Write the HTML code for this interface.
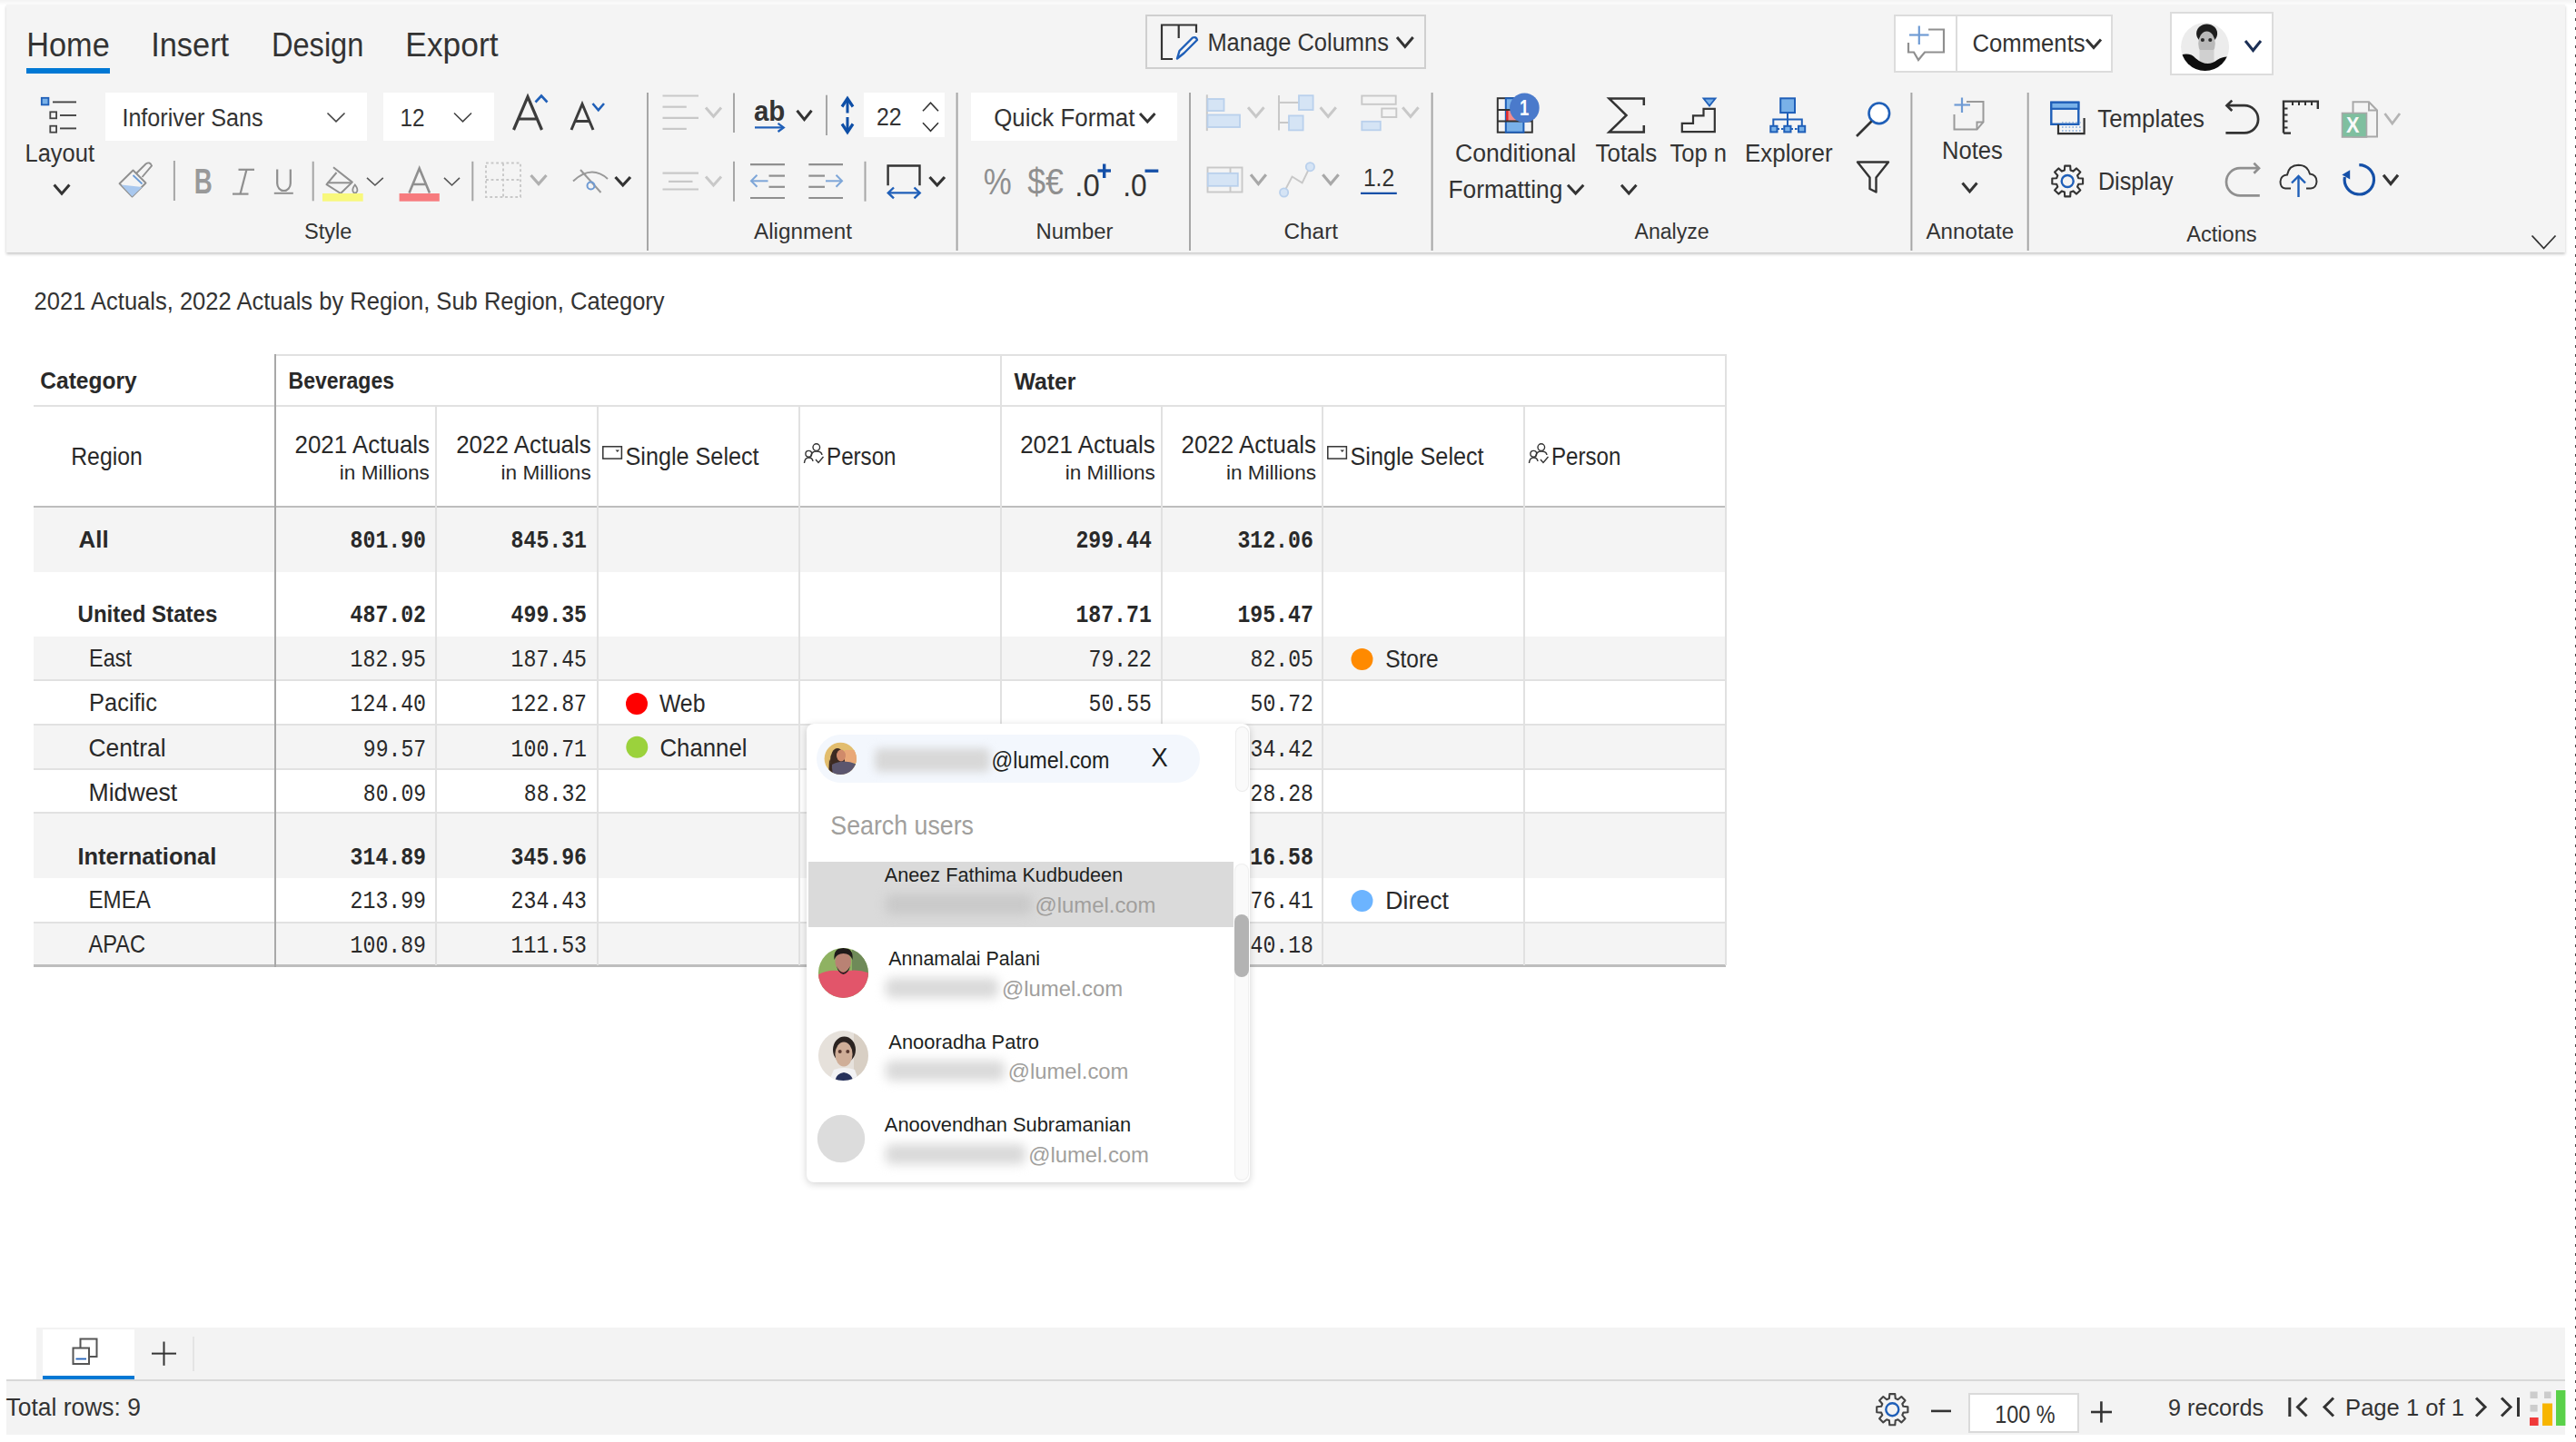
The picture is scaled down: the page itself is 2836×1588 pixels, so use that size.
<!DOCTYPE html>
<html><head><meta charset="utf-8"><title>Inforiver</title><style>
html,body{margin:0;padding:0;width:2836px;height:1588px;overflow:hidden;background:#fff;}
.t{position:absolute;white-space:nowrap;line-height:1;}
.b{position:absolute;}
svg.ov{position:absolute;left:0;top:0;width:2836px;height:1588px;}
</style></head>
<body>
<div class="b" style="left:0px;top:0px;width:2836px;height:5px;background:linear-gradient(#f3f3f3,#fdfdfd);z-index:0;"></div>
<div class="b" style="left:7px;top:5px;width:2817px;height:273px;background:#f4f4f4;z-index:1;box-shadow:0 2px 3px rgba(0,0,0,0.22);"></div>
<div class="b" style="left:2834.5px;top:0px;width:1.5px;height:1588px;background:repeating-linear-gradient(#444 0 3px, transparent 3px 10px);z-index:2;"></div>
<div class="b" style="left:29px;top:75px;width:92px;height:6px;background:#0078d4;z-index:3;"></div>
<div class="b" style="left:1261px;top:16px;width:309px;height:60px;background:transparent;z-index:3;border:2px solid #cfcfcf;box-sizing:border-box;"></div>
<div class="b" style="left:2085px;top:16px;width:241px;height:64px;background:#fff;z-index:3;border:2px solid #dcdcdc;box-sizing:border-box;"></div>
<div class="b" style="left:2153px;top:16px;width:2px;height:64px;background:#dcdcdc;z-index:4;"></div>
<div class="b" style="left:2389px;top:13px;width:114px;height:70px;background:#fff;z-index:3;border:2px solid #dcdcdc;box-sizing:border-box;"></div>
<div class="b" style="left:116px;top:102px;width:288px;height:53px;background:#fff;z-index:3;"></div>
<div class="b" style="left:422px;top:102px;width:122px;height:53px;background:#fff;z-index:3;"></div>
<div class="b" style="left:951px;top:102px;width:89px;height:49px;background:#fff;z-index:3;"></div>
<div class="b" style="left:1069px;top:102px;width:227px;height:53px;background:#fff;z-index:3;"></div>
<div class="b" style="left:37px;top:559px;width:1863px;height:71px;background:#f4f4f4;z-index:1;"></div>
<div class="b" style="left:37px;top:630px;width:1863px;height:71px;background:#fff;z-index:1;"></div>
<div class="b" style="left:37px;top:701px;width:1863px;height:48px;background:#f4f4f4;z-index:1;"></div>
<div class="b" style="left:37px;top:748px;width:1863px;height:2px;background:#e1e1e1;z-index:2;"></div>
<div class="b" style="left:37px;top:749px;width:1863px;height:49px;background:#fff;z-index:1;"></div>
<div class="b" style="left:37px;top:797px;width:1863px;height:2px;background:#e1e1e1;z-index:2;"></div>
<div class="b" style="left:37px;top:798px;width:1863px;height:49px;background:#f4f4f4;z-index:1;"></div>
<div class="b" style="left:37px;top:846px;width:1863px;height:2px;background:#e1e1e1;z-index:2;"></div>
<div class="b" style="left:37px;top:847px;width:1863px;height:48px;background:#fff;z-index:1;"></div>
<div class="b" style="left:37px;top:894px;width:1863px;height:2px;background:#e1e1e1;z-index:2;"></div>
<div class="b" style="left:37px;top:895px;width:1863px;height:72px;background:#f4f4f4;z-index:1;"></div>
<div class="b" style="left:37px;top:967px;width:1863px;height:49px;background:#fff;z-index:1;"></div>
<div class="b" style="left:37px;top:1015px;width:1863px;height:2px;background:#e1e1e1;z-index:2;"></div>
<div class="b" style="left:37px;top:1016px;width:1863px;height:47px;background:#f4f4f4;z-index:1;"></div>
<div class="b" style="left:302px;top:390px;width:1598px;height:2px;background:#e1e1e1;z-index:2;"></div>
<div class="b" style="left:37px;top:446px;width:1863px;height:2px;background:#e1e1e1;z-index:2;"></div>
<div class="b" style="left:37px;top:557px;width:1863px;height:2px;background:#bdbdbd;z-index:2;"></div>
<div class="b" style="left:37px;top:1062px;width:1863px;height:3px;background:#bdbdbd;z-index:2;"></div>
<div class="b" style="left:302px;top:390px;width:2px;height:675px;background:#a8a8a8;z-index:3;"></div>
<div class="b" style="left:1101px;top:390px;width:2px;height:673px;background:#e1e1e1;z-index:2;"></div>
<div class="b" style="left:1899px;top:390px;width:2px;height:673px;background:#e1e1e1;z-index:2;"></div>
<div class="b" style="left:479px;top:447px;width:2px;height:616px;background:#e1e1e1;z-index:2;"></div>
<div class="b" style="left:657px;top:447px;width:2px;height:616px;background:#e1e1e1;z-index:2;"></div>
<div class="b" style="left:879px;top:447px;width:2px;height:616px;background:#e1e1e1;z-index:2;"></div>
<div class="b" style="left:1278px;top:447px;width:2px;height:616px;background:#e1e1e1;z-index:2;"></div>
<div class="b" style="left:1455px;top:447px;width:2px;height:616px;background:#e1e1e1;z-index:2;"></div>
<div class="b" style="left:1677px;top:447px;width:2px;height:616px;background:#e1e1e1;z-index:2;"></div>
<div class="b" style="left:40px;top:1462px;width:2784px;height:58px;background:#f3f3f3;z-index:1;"></div>
<div class="b" style="left:47px;top:1464px;width:101px;height:55px;background:#fff;z-index:2;"></div>
<div class="b" style="left:47px;top:1515px;width:101px;height:4px;background:#0078d4;z-index:3;"></div>
<div class="b" style="left:212px;top:1472px;width:2px;height:38px;background:#e4e4e4;z-index:2;"></div>
<div class="b" style="left:7px;top:1519px;width:2817px;height:2px;background:#d8d8d8;z-index:2;"></div>
<div class="b" style="left:7px;top:1521px;width:2817px;height:59px;background:#f3f3f3;z-index:1;"></div>
<div class="b" style="left:2167px;top:1534px;width:122px;height:44px;background:#fff;z-index:3;border:2px solid #dadada;box-sizing:border-box;"></div>
<div class="b" style="left:888px;top:797px;width:488px;height:505px;background:#fff;z-index:20;border-radius:8px;box-shadow:0 2px 8px rgba(0,0,0,0.18);"></div>
<div class="b" style="left:899px;top:809px;width:422px;height:53px;background:#f3f7fd;z-index:21;border-radius:27px;"></div>
<div class="b" style="left:963px;top:824px;width:127px;height:26px;background:#d8d8d8;z-index:21;filter:blur(5px);border-radius:6px;"></div>
<div class="b" style="left:890px;top:949px;width:468px;height:72px;background:#dadada;z-index:21;"></div>
<div class="b" style="left:1360px;top:800px;width:15px;height:72px;background:#fafafa;z-index:21;border-radius:8px;box-shadow:inset 0 0 0 1px #ececec;"></div>
<div class="b" style="left:1359px;top:951px;width:16px;height:349px;background:#fafafa;z-index:21;border-radius:8px;box-shadow:inset 0 0 0 1px #efefef;"></div>
<div class="b" style="left:1359px;top:1007px;width:16px;height:69px;background:#b3b3b3;z-index:22;border-radius:8px;"></div>
<div class="b" style="left:975px;top:984.7px;width:161px;height:22.0px;background:#c9c9c9;z-index:22;filter:blur(6px);border-radius:6px;"></div>
<div class="b" style="left:975px;top:1076.5px;width:124.40000000000009px;height:22.0px;background:#d9d9d9;z-index:22;filter:blur(6px);border-radius:6px;"></div>
<div class="b" style="left:975px;top:1168px;width:131.20000000000005px;height:22px;background:#d9d9d9;z-index:22;filter:blur(6px);border-radius:6px;"></div>
<div class="b" style="left:975px;top:1260px;width:153.70000000000005px;height:22px;background:#d9d9d9;z-index:22;filter:blur(6px);border-radius:6px;"></div>
<svg class="ov" style="z-index:5" width="2836" height="1588" viewBox="0 0 2836 1588">
<text x="29.3" y="62.0" font-family="'Liberation Sans', sans-serif" font-size="36" fill="#333333" font-weight="400" textLength="91.4" lengthAdjust="spacingAndGlyphs" >Home</text>
<text x="166.2" y="62.0" font-family="'Liberation Sans', sans-serif" font-size="36" fill="#333333" font-weight="400" textLength="86.0" lengthAdjust="spacingAndGlyphs" >Insert</text>
<text x="298.9" y="62.0" font-family="'Liberation Sans', sans-serif" font-size="36" fill="#333333" font-weight="400" textLength="101.5" lengthAdjust="spacingAndGlyphs" >Design</text>
<text x="446.3" y="62.0" font-family="'Liberation Sans', sans-serif" font-size="36" fill="#333333" font-weight="400" textLength="102.2" lengthAdjust="spacingAndGlyphs" >Export</text>
<text x="1329.4" y="55.9" font-family="'Liberation Sans', sans-serif" font-size="27" fill="#333333" font-weight="400" textLength="199.5" lengthAdjust="spacingAndGlyphs" >Manage Columns</text>
<text x="2171.5" y="57.3" font-family="'Liberation Sans', sans-serif" font-size="27" fill="#333333" font-weight="400" textLength="124.1" lengthAdjust="spacingAndGlyphs" >Comments</text>
<text x="27.5" y="178.0" font-family="'Liberation Sans', sans-serif" font-size="27" fill="#333333" font-weight="400" textLength="76.5" lengthAdjust="spacingAndGlyphs" >Layout</text>
<text x="134.4" y="138.9" font-family="'Liberation Sans', sans-serif" font-size="27" fill="#333333" font-weight="400" textLength="155.2" lengthAdjust="spacingAndGlyphs" >Inforiver Sans</text>
<text x="440.5" y="138.7" font-family="'Liberation Sans', sans-serif" font-size="27" fill="#333333" font-weight="400" textLength="27.0" lengthAdjust="spacingAndGlyphs" >12</text>
<text x="965.0" y="138.0" font-family="'Liberation Sans', sans-serif" font-size="27" fill="#333333" font-weight="400" textLength="27.6" lengthAdjust="spacingAndGlyphs" >22</text>
<text x="1094.2" y="138.7" font-family="'Liberation Sans', sans-serif" font-size="27" fill="#333333" font-weight="400" textLength="155.2" lengthAdjust="spacingAndGlyphs" >Quick Format</text>
<text x="1500.9" y="205.0" font-family="'Liberation Sans', sans-serif" font-size="27.5" fill="#333333" font-weight="400" textLength="34.2" lengthAdjust="spacingAndGlyphs" >1.2</text>
<text x="1602.0" y="177.8" font-family="'Liberation Sans', sans-serif" font-size="27" fill="#333333" font-weight="400" textLength="133.1" lengthAdjust="spacingAndGlyphs" >Conditional</text>
<text x="1594.5" y="217.6" font-family="'Liberation Sans', sans-serif" font-size="27" fill="#333333" font-weight="400" textLength="125.8" lengthAdjust="spacingAndGlyphs" >Formatting</text>
<text x="1756.5" y="177.8" font-family="'Liberation Sans', sans-serif" font-size="27" fill="#333333" font-weight="400" textLength="67.8" lengthAdjust="spacingAndGlyphs" >Totals</text>
<text x="1838.5" y="177.8" font-family="'Liberation Sans', sans-serif" font-size="27" fill="#333333" font-weight="400" textLength="62.5" lengthAdjust="spacingAndGlyphs" >Top n</text>
<text x="1920.9" y="177.5" font-family="'Liberation Sans', sans-serif" font-size="27" fill="#333333" font-weight="400" textLength="96.7" lengthAdjust="spacingAndGlyphs" >Explorer</text>
<text x="2138.0" y="174.7" font-family="'Liberation Sans', sans-serif" font-size="27" fill="#333333" font-weight="400" textLength="66.8" lengthAdjust="spacingAndGlyphs" >Notes</text>
<text x="2309.3" y="139.7" font-family="'Liberation Sans', sans-serif" font-size="27" fill="#333333" font-weight="400" textLength="117.7" lengthAdjust="spacingAndGlyphs" >Templates</text>
<text x="2309.9" y="209.0" font-family="'Liberation Sans', sans-serif" font-size="27" fill="#333333" font-weight="400" textLength="82.7" lengthAdjust="spacingAndGlyphs" >Display</text>
<text x="334.9" y="262.6" font-family="'Liberation Sans', sans-serif" font-size="23.5" fill="#333333" font-weight="400" textLength="52.5" lengthAdjust="spacingAndGlyphs" >Style</text>
<text x="830.0" y="262.6" font-family="'Liberation Sans', sans-serif" font-size="23.5" fill="#333333" font-weight="400" textLength="107.9" lengthAdjust="spacingAndGlyphs" >Alignment</text>
<text x="1140.5" y="262.6" font-family="'Liberation Sans', sans-serif" font-size="23.5" fill="#333333" font-weight="400" textLength="84.9" lengthAdjust="spacingAndGlyphs" >Number</text>
<text x="1413.5" y="262.6" font-family="'Liberation Sans', sans-serif" font-size="23.5" fill="#333333" font-weight="400" textLength="59.5" lengthAdjust="spacingAndGlyphs" >Chart</text>
<text x="1799.5" y="262.6" font-family="'Liberation Sans', sans-serif" font-size="23.5" fill="#333333" font-weight="400" textLength="82.2" lengthAdjust="spacingAndGlyphs" >Analyze</text>
<text x="2120.5" y="262.6" font-family="'Liberation Sans', sans-serif" font-size="23.5" fill="#333333" font-weight="400" textLength="96.7" lengthAdjust="spacingAndGlyphs" >Annotate</text>
<text x="2407.2" y="265.5" font-family="'Liberation Sans', sans-serif" font-size="23.5" fill="#333333" font-weight="400" textLength="77.5" lengthAdjust="spacingAndGlyphs" >Actions</text>
<rect x="712" y="102" width="2" height="174" fill="#a6a6a6"/>
<rect x="1052.6" y="102" width="2" height="174" fill="#a6a6a6"/>
<rect x="1309" y="102" width="2" height="174" fill="#a6a6a6"/>
<rect x="1575.6" y="102" width="2" height="174" fill="#a6a6a6"/>
<rect x="2103.4" y="102" width="2" height="174" fill="#a6a6a6"/>
<rect x="2231.7" y="102" width="2" height="174" fill="#a6a6a6"/>
<rect x="190.9" y="177" width="2" height="44" fill="#a6a6a6"/>
<rect x="343.7" y="177.8" width="2" height="43.5" fill="#a6a6a6"/>
<rect x="519.3" y="177.8" width="2" height="43.5" fill="#a6a6a6"/>
<rect x="807" y="102.5" width="2" height="43.5" fill="#a6a6a6"/>
<rect x="909" y="104.7" width="2" height="44.3" fill="#a6a6a6"/>
<rect x="807" y="177.8" width="2" height="43.89999999999998" fill="#a6a6a6"/>
<rect x="951.5" y="177.8" width="2" height="43.89999999999998" fill="#a6a6a6"/>
<text x="37.5" y="341.0" font-family="'Liberation Sans', sans-serif" font-size="27.5" fill="#333333" font-weight="400" textLength="694.1" lengthAdjust="spacingAndGlyphs" >2021 Actuals, 2022 Actuals by Region, Sub Region, Category</text>
<text x="44.3" y="428.0" font-family="'Liberation Sans', sans-serif" font-size="26.4" fill="#292929" font-weight="700" textLength="106.3" lengthAdjust="spacingAndGlyphs" >Category</text>
<text x="317.5" y="428.0" font-family="'Liberation Sans', sans-serif" font-size="26.4" fill="#292929" font-weight="700" textLength="116.5" lengthAdjust="spacingAndGlyphs" >Beverages</text>
<text x="1116.5" y="429.0" font-family="'Liberation Sans', sans-serif" font-size="26.4" fill="#292929" font-weight="700" textLength="67.8" lengthAdjust="spacingAndGlyphs" >Water</text>
<text x="78.2" y="512.3" font-family="'Liberation Sans', sans-serif" font-size="27.5" fill="#292929" font-weight="400" textLength="78.6" lengthAdjust="spacingAndGlyphs" >Region</text>
<text x="324.5" y="499.0" font-family="'Liberation Sans', sans-serif" font-size="27.5" fill="#292929" font-weight="400" textLength="148.6" lengthAdjust="spacingAndGlyphs" >2021 Actuals</text>
<text x="373.8" y="527.7" font-family="'Liberation Sans', sans-serif" font-size="22.5" fill="#292929" font-weight="400" textLength="99.1" lengthAdjust="spacingAndGlyphs" >in Millions</text>
<text x="502.2" y="499.0" font-family="'Liberation Sans', sans-serif" font-size="27.5" fill="#292929" font-weight="400" textLength="148.6" lengthAdjust="spacingAndGlyphs" >2022 Actuals</text>
<text x="551.6" y="527.7" font-family="'Liberation Sans', sans-serif" font-size="22.5" fill="#292929" font-weight="400" textLength="99.1" lengthAdjust="spacingAndGlyphs" >in Millions</text>
<text x="1123.2" y="499.0" font-family="'Liberation Sans', sans-serif" font-size="27.5" fill="#292929" font-weight="400" textLength="148.6" lengthAdjust="spacingAndGlyphs" >2021 Actuals</text>
<text x="1172.7" y="527.7" font-family="'Liberation Sans', sans-serif" font-size="22.5" fill="#292929" font-weight="400" textLength="99.1" lengthAdjust="spacingAndGlyphs" >in Millions</text>
<text x="1300.5" y="499.0" font-family="'Liberation Sans', sans-serif" font-size="27.5" fill="#292929" font-weight="400" textLength="148.6" lengthAdjust="spacingAndGlyphs" >2022 Actuals</text>
<text x="1349.9" y="527.7" font-family="'Liberation Sans', sans-serif" font-size="22.5" fill="#292929" font-weight="400" textLength="99.1" lengthAdjust="spacingAndGlyphs" >in Millions</text>
<text x="688.5" y="511.8" font-family="'Liberation Sans', sans-serif" font-size="27.5" fill="#292929" font-weight="400" textLength="147.1" lengthAdjust="spacingAndGlyphs" >Single Select</text>
<text x="1486.5" y="511.8" font-family="'Liberation Sans', sans-serif" font-size="27.5" fill="#292929" font-weight="400" textLength="147.1" lengthAdjust="spacingAndGlyphs" >Single Select</text>
<text x="910.1" y="511.8" font-family="'Liberation Sans', sans-serif" font-size="27.5" fill="#292929" font-weight="400" textLength="76.4" lengthAdjust="spacingAndGlyphs" >Person</text>
<text x="1708.0" y="511.8" font-family="'Liberation Sans', sans-serif" font-size="27.5" fill="#292929" font-weight="400" textLength="76.4" lengthAdjust="spacingAndGlyphs" >Person</text>
<text x="86.5" y="603.4" font-family="'Liberation Sans', sans-serif" font-size="26.4" fill="#292929" font-weight="700" textLength="33.1" lengthAdjust="spacingAndGlyphs" >All</text>
<text x="385.6" y="603.4" font-family="'Liberation Mono', monospace" font-size="27.6" fill="#292929" font-weight="700" textLength="83.4" lengthAdjust="spacingAndGlyphs" >801.90</text>
<text x="562.6" y="603.4" font-family="'Liberation Mono', monospace" font-size="27.6" fill="#292929" font-weight="700" textLength="83.4" lengthAdjust="spacingAndGlyphs" >845.31</text>
<text x="1184.4" y="603.4" font-family="'Liberation Mono', monospace" font-size="27.6" fill="#292929" font-weight="700" textLength="83.4" lengthAdjust="spacingAndGlyphs" >299.44</text>
<text x="1362.4" y="603.4" font-family="'Liberation Mono', monospace" font-size="27.6" fill="#292929" font-weight="700" textLength="83.4" lengthAdjust="spacingAndGlyphs" >312.06</text>
<text x="85.5" y="685.0" font-family="'Liberation Sans', sans-serif" font-size="26.4" fill="#292929" font-weight="700" textLength="153.8" lengthAdjust="spacingAndGlyphs" >United States</text>
<text x="385.6" y="685.0" font-family="'Liberation Mono', monospace" font-size="27.6" fill="#292929" font-weight="700" textLength="83.4" lengthAdjust="spacingAndGlyphs" >487.02</text>
<text x="562.6" y="685.0" font-family="'Liberation Mono', monospace" font-size="27.6" fill="#292929" font-weight="700" textLength="83.4" lengthAdjust="spacingAndGlyphs" >499.35</text>
<text x="1184.4" y="685.0" font-family="'Liberation Mono', monospace" font-size="27.6" fill="#292929" font-weight="700" textLength="83.4" lengthAdjust="spacingAndGlyphs" >187.71</text>
<text x="1362.4" y="685.0" font-family="'Liberation Mono', monospace" font-size="27.6" fill="#292929" font-weight="700" textLength="83.4" lengthAdjust="spacingAndGlyphs" >195.47</text>
<text x="98.1" y="733.9" font-family="'Liberation Sans', sans-serif" font-size="27.3" fill="#292929" font-weight="400" textLength="46.9" lengthAdjust="spacingAndGlyphs" >East</text>
<text x="385.6" y="733.9" font-family="'Liberation Mono', monospace" font-size="27.6" fill="#292929" font-weight="400" textLength="83.4" lengthAdjust="spacingAndGlyphs" >182.95</text>
<text x="562.6" y="733.9" font-family="'Liberation Mono', monospace" font-size="27.6" fill="#292929" font-weight="400" textLength="83.4" lengthAdjust="spacingAndGlyphs" >187.45</text>
<text x="1198.6" y="733.9" font-family="'Liberation Mono', monospace" font-size="27.6" fill="#292929" font-weight="400" textLength="69.3" lengthAdjust="spacingAndGlyphs" >79.22</text>
<text x="1376.6" y="733.9" font-family="'Liberation Mono', monospace" font-size="27.6" fill="#292929" font-weight="400" textLength="69.3" lengthAdjust="spacingAndGlyphs" >82.05</text>
<text x="98.1" y="783.0" font-family="'Liberation Sans', sans-serif" font-size="27.3" fill="#292929" font-weight="400" textLength="74.9" lengthAdjust="spacingAndGlyphs" >Pacific</text>
<text x="385.6" y="783.0" font-family="'Liberation Mono', monospace" font-size="27.6" fill="#292929" font-weight="400" textLength="83.4" lengthAdjust="spacingAndGlyphs" >124.40</text>
<text x="562.6" y="783.0" font-family="'Liberation Mono', monospace" font-size="27.6" fill="#292929" font-weight="400" textLength="83.4" lengthAdjust="spacingAndGlyphs" >122.87</text>
<text x="1198.6" y="783.0" font-family="'Liberation Mono', monospace" font-size="27.6" fill="#292929" font-weight="400" textLength="69.3" lengthAdjust="spacingAndGlyphs" >50.55</text>
<text x="1376.6" y="783.0" font-family="'Liberation Mono', monospace" font-size="27.6" fill="#292929" font-weight="400" textLength="69.3" lengthAdjust="spacingAndGlyphs" >50.72</text>
<text x="97.5" y="832.6" font-family="'Liberation Sans', sans-serif" font-size="27.3" fill="#292929" font-weight="400" textLength="85.0" lengthAdjust="spacingAndGlyphs" >Central</text>
<text x="399.8" y="832.6" font-family="'Liberation Mono', monospace" font-size="27.6" fill="#292929" font-weight="400" textLength="69.3" lengthAdjust="spacingAndGlyphs" >99.57</text>
<text x="562.6" y="832.6" font-family="'Liberation Mono', monospace" font-size="27.6" fill="#292929" font-weight="400" textLength="83.4" lengthAdjust="spacingAndGlyphs" >100.71</text>
<text x="1198.6" y="832.6" font-family="'Liberation Mono', monospace" font-size="27.6" fill="#292929" font-weight="400" textLength="69.3" lengthAdjust="spacingAndGlyphs" >31.03</text>
<text x="1376.6" y="832.6" font-family="'Liberation Mono', monospace" font-size="27.6" fill="#292929" font-weight="400" textLength="69.3" lengthAdjust="spacingAndGlyphs" >34.42</text>
<text x="97.5" y="881.5" font-family="'Liberation Sans', sans-serif" font-size="27.3" fill="#292929" font-weight="400" textLength="97.7" lengthAdjust="spacingAndGlyphs" >Midwest</text>
<text x="399.8" y="881.5" font-family="'Liberation Mono', monospace" font-size="27.6" fill="#292929" font-weight="400" textLength="69.3" lengthAdjust="spacingAndGlyphs" >80.09</text>
<text x="576.8" y="881.5" font-family="'Liberation Mono', monospace" font-size="27.6" fill="#292929" font-weight="400" textLength="69.3" lengthAdjust="spacingAndGlyphs" >88.32</text>
<text x="1198.6" y="881.5" font-family="'Liberation Mono', monospace" font-size="27.6" fill="#292929" font-weight="400" textLength="69.3" lengthAdjust="spacingAndGlyphs" >26.91</text>
<text x="1376.6" y="881.5" font-family="'Liberation Mono', monospace" font-size="27.6" fill="#292929" font-weight="400" textLength="69.3" lengthAdjust="spacingAndGlyphs" >28.28</text>
<text x="85.5" y="951.8" font-family="'Liberation Sans', sans-serif" font-size="26.4" fill="#292929" font-weight="700" textLength="152.7" lengthAdjust="spacingAndGlyphs" >International</text>
<text x="385.6" y="951.8" font-family="'Liberation Mono', monospace" font-size="27.6" fill="#292929" font-weight="700" textLength="83.4" lengthAdjust="spacingAndGlyphs" >314.89</text>
<text x="562.6" y="951.8" font-family="'Liberation Mono', monospace" font-size="27.6" fill="#292929" font-weight="700" textLength="83.4" lengthAdjust="spacingAndGlyphs" >345.96</text>
<text x="1184.4" y="951.8" font-family="'Liberation Mono', monospace" font-size="27.6" fill="#292929" font-weight="700" textLength="83.4" lengthAdjust="spacingAndGlyphs" >111.73</text>
<text x="1362.4" y="951.8" font-family="'Liberation Mono', monospace" font-size="27.6" fill="#292929" font-weight="700" textLength="83.4" lengthAdjust="spacingAndGlyphs" >116.58</text>
<text x="97.5" y="999.7" font-family="'Liberation Sans', sans-serif" font-size="27.3" fill="#292929" font-weight="400" textLength="68.4" lengthAdjust="spacingAndGlyphs" >EMEA</text>
<text x="385.6" y="999.7" font-family="'Liberation Mono', monospace" font-size="27.6" fill="#292929" font-weight="400" textLength="83.4" lengthAdjust="spacingAndGlyphs" >213.99</text>
<text x="562.6" y="999.7" font-family="'Liberation Mono', monospace" font-size="27.6" fill="#292929" font-weight="400" textLength="83.4" lengthAdjust="spacingAndGlyphs" >234.43</text>
<text x="1198.6" y="999.7" font-family="'Liberation Mono', monospace" font-size="27.6" fill="#292929" font-weight="400" textLength="69.3" lengthAdjust="spacingAndGlyphs" >73.10</text>
<text x="1376.6" y="999.7" font-family="'Liberation Mono', monospace" font-size="27.6" fill="#292929" font-weight="400" textLength="69.3" lengthAdjust="spacingAndGlyphs" >76.41</text>
<text x="97.5" y="1049.2" font-family="'Liberation Sans', sans-serif" font-size="27.3" fill="#292929" font-weight="400" textLength="62.6" lengthAdjust="spacingAndGlyphs" >APAC</text>
<text x="385.6" y="1049.2" font-family="'Liberation Mono', monospace" font-size="27.6" fill="#292929" font-weight="400" textLength="83.4" lengthAdjust="spacingAndGlyphs" >100.89</text>
<text x="562.6" y="1049.2" font-family="'Liberation Mono', monospace" font-size="27.6" fill="#292929" font-weight="400" textLength="83.4" lengthAdjust="spacingAndGlyphs" >111.53</text>
<text x="1198.6" y="1049.2" font-family="'Liberation Mono', monospace" font-size="27.6" fill="#292929" font-weight="400" textLength="69.3" lengthAdjust="spacingAndGlyphs" >38.63</text>
<text x="1376.6" y="1049.2" font-family="'Liberation Mono', monospace" font-size="27.6" fill="#292929" font-weight="400" textLength="69.3" lengthAdjust="spacingAndGlyphs" >40.18</text>
<circle cx="701" cy="775" r="12" fill="#ff0000"/>
<text x="725.9" y="783.7" font-family="'Liberation Sans', sans-serif" font-size="27.3" fill="#292929" font-weight="400" textLength="50.6" lengthAdjust="spacingAndGlyphs" >Web</text>
<circle cx="701.3" cy="822.7" r="12" fill="#9bd23c"/>
<text x="726.5" y="832.6" font-family="'Liberation Sans', sans-serif" font-size="27.3" fill="#292929" font-weight="400" textLength="96.0" lengthAdjust="spacingAndGlyphs" >Channel</text>
<circle cx="1499.5" cy="726" r="12" fill="#ff8a00"/>
<text x="1525.2" y="734.9" font-family="'Liberation Sans', sans-serif" font-size="27.3" fill="#292929" font-weight="400" textLength="58.5" lengthAdjust="spacingAndGlyphs" >Store</text>
<circle cx="1499.5" cy="992" r="12" fill="#6cb4ff"/>
<text x="1525.2" y="1001.3" font-family="'Liberation Sans', sans-serif" font-size="27.3" fill="#292929" font-weight="400" textLength="69.7" lengthAdjust="spacingAndGlyphs" >Direct</text>
<text x="6.5" y="1559.0" font-family="'Liberation Sans', sans-serif" font-size="27.5" fill="#333333" font-weight="400" textLength="148.4" lengthAdjust="spacingAndGlyphs" >Total rows: 9</text>
<text x="2196.2" y="1566.6" font-family="'Liberation Sans', sans-serif" font-size="27" fill="#333333" font-weight="400" textLength="66.4" lengthAdjust="spacingAndGlyphs" >100 %</text>
<text x="2387.0" y="1558.7" font-family="'Liberation Sans', sans-serif" font-size="25.5" fill="#333333" font-weight="400" textLength="105.0" lengthAdjust="spacingAndGlyphs" >9 records</text>
<text x="2582.1" y="1558.7" font-family="'Liberation Sans', sans-serif" font-size="25.5" fill="#333333" font-weight="400" textLength="130.8" lengthAdjust="spacingAndGlyphs" >Page 1 of 1</text>
<polyline points="1317,36 1317,27.5 1279,27.5 1279,65 1291,65" fill="none" stroke="#333333" stroke-width="2.2" stroke-linecap="butt" stroke-linejoin="miter" />
<line x1="1297.7" y1="27.5" x2="1297.7" y2="42" stroke="#333333" stroke-width="2.2" />
<path d="M1296,64.5 L1298.5,56 L1313,41.5 Q1317,40 1318,44 L1303.5,58.5 Z" fill="none" stroke="#1f5fb8" stroke-width="2.4" stroke-linejoin="round"/>
<polyline points="1538,41 1546.85,51.5 1555.7,41" fill="none" stroke="#333333" stroke-width="3" stroke-linecap="butt" stroke-linejoin="miter" />
<line x1="2112.8" y1="28.5" x2="2112.8" y2="49" stroke="#6f9bd4" stroke-width="2.2" />
<line x1="2102" y1="38.5" x2="2123.5" y2="38.5" stroke="#6f9bd4" stroke-width="2.2" />
<polyline points="2123,32.5 2140,32.5 2140,57.5 2119,57.5 2112,66 2107,57.5 2101,57.5 2101,47" fill="none" stroke="#8f8f8f" stroke-width="2.2" stroke-linecap="butt" stroke-linejoin="miter" />
<polyline points="2297,43.5 2305.0,52.5 2313,43.5" fill="none" stroke="#333333" stroke-width="3" stroke-linecap="butt" stroke-linejoin="miter" />
<clipPath id="cpA"><circle cx="2427.6" cy="51.6" r="26.5"/></clipPath>
<g clip-path="url(#cpA)"><rect x="2400" y="24" width="56" height="56" fill="#ececec"/><ellipse cx="2429.6" cy="37" rx="11.5" ry="10.5" fill="#1e1e1e"/><ellipse cx="2429.5" cy="48" rx="9.3" ry="13.5" fill="#b9b9b9"/><rect x="2421.5" y="55" width="16" height="16" fill="#d0d0d0"/><circle cx="2424.9" cy="44" r="2.1" fill="#2a2a2a"/><circle cx="2433.3" cy="44" r="2.1" fill="#2a2a2a"/><path d="M2399,61 Q2411,57 2417,64 Q2429.7,75 2441,66 Q2448,61 2457,63 L2457,82 L2398,82 Z" fill="#0e0e0e"/></g>
<polyline points="2472,45 2480.5,55.5 2489,45" fill="none" stroke="#1b2f55" stroke-width="3" stroke-linecap="butt" stroke-linejoin="miter" />
<rect x="45.8" y="107.8" width="7.6" height="7.6" fill="#79b1e8" stroke="#1f5fb8" stroke-width="1.8"/>
<line x1="58" y1="112.4" x2="84" y2="112.4" stroke="#444" stroke-width="1.9" />
<rect x="55.3" y="123.3" width="6.8" height="7" fill="none" stroke="#444" stroke-width="1.8"/>
<rect x="55.3" y="138.7" width="6.8" height="7" fill="none" stroke="#444" stroke-width="1.8"/>
<line x1="66" y1="127" x2="84" y2="127" stroke="#444" stroke-width="1.9" />
<line x1="66" y1="141.4" x2="84" y2="141.4" stroke="#444" stroke-width="1.9" />
<polyline points="59.6,203.5 68.0,213.2 76.4,203.5" fill="none" stroke="#333333" stroke-width="3" stroke-linecap="butt" stroke-linejoin="miter" />
<polyline points="360.5,124.5 370.0,133.8 379.5,124.5" fill="none" stroke="#444" stroke-width="1.6" stroke-linecap="butt" stroke-linejoin="miter" />
<polyline points="500,124.5 509.5,133.8 519,124.5" fill="none" stroke="#444" stroke-width="1.6" stroke-linecap="butt" stroke-linejoin="miter" />
<path d="M565.5,143 L581,106.5 L596.5,143 M570.5,131 L591.5,131" fill="none" stroke="#3c3c3c" stroke-width="3.2"/>
<polyline points="589.5,112.5 596.0,105.5 602.5,112.5" fill="none" stroke="#1f5fb8" stroke-width="2.6" stroke-linecap="butt" stroke-linejoin="miter" />
<path d="M629,143 L641,114.5 L653,143 M633.3,133.5 L648.7,133.5" fill="none" stroke="#3c3c3c" stroke-width="3"/>
<polyline points="652.5,114 658.75,121.3 665,114" fill="none" stroke="#1f5fb8" stroke-width="2.6" stroke-linecap="butt" stroke-linejoin="miter" />
<line x1="729.5" y1="105.5" x2="769" y2="105.5" stroke="#c8c8c8" stroke-width="2.2" />
<line x1="729.5" y1="117.7" x2="755.8" y2="117.7" stroke="#c8c8c8" stroke-width="2.2" />
<line x1="729.5" y1="129.8" x2="769" y2="129.8" stroke="#c8c8c8" stroke-width="2.2" />
<line x1="729.5" y1="141.9" x2="755.8" y2="141.9" stroke="#c8c8c8" stroke-width="2.2" />
<polyline points="777,118.5 785.5,128.2 794,118.5" fill="none" stroke="#c8c8c8" stroke-width="3" stroke-linecap="butt" stroke-linejoin="miter" />
<text x="829.9" y="133.0" font-family="'Liberation Sans', sans-serif" font-size="31" fill="#333" font-weight="700" textLength="34.4" lengthAdjust="spacingAndGlyphs" >ab</text>
<line x1="831" y1="140.4" x2="862" y2="140.4" stroke="#1f5fb8" stroke-width="2.2" />
<polyline points="856.5,135.8 862.8,140.4 856.5,145" fill="none" stroke="#1f5fb8" stroke-width="2.2" stroke-linecap="butt" stroke-linejoin="miter" />
<polyline points="877.5,121.8 885.5,131.6 893.5,121.8" fill="none" stroke="#333333" stroke-width="3" stroke-linecap="butt" stroke-linejoin="miter" />
<line x1="933" y1="111" x2="933" y2="124.5" stroke="#0d4ea6" stroke-width="3" />
<line x1="933" y1="129" x2="933" y2="143" stroke="#0d4ea6" stroke-width="3" />
<polyline points="927,117.5 933,108.5 939,117.5" fill="none" stroke="#0d4ea6" stroke-width="3.2" stroke-linecap="butt" stroke-linejoin="miter" />
<polyline points="927,136.5 933,145.5 939,136.5" fill="none" stroke="#0d4ea6" stroke-width="3.2" stroke-linecap="butt" stroke-linejoin="miter" />
<polyline points="1016,122.3 1024.5,113.2 1033,122.3" fill="none" stroke="#333" stroke-width="1.6" stroke-linecap="butt" stroke-linejoin="miter" />
<polyline points="1016,135.2 1024.5,144.3 1033,135.2" fill="none" stroke="#333" stroke-width="1.6" stroke-linecap="butt" stroke-linejoin="miter" />
<polyline points="1255,125 1263.25,134 1271.5,125" fill="none" stroke="#333333" stroke-width="3" stroke-linecap="butt" stroke-linejoin="miter" />
<line x1="1328.8" y1="104.3" x2="1328.8" y2="144.1" stroke="#c8c8c8" stroke-width="2" />
<rect x="1329.5" y="109" width="18" height="13" fill="#d5e4f5" stroke="#b9d0ec" stroke-width="1.8"/>
<rect x="1329.5" y="126.5" width="35.5" height="13.5" fill="#d5e4f5" stroke="#b9d0ec" stroke-width="1.8"/>
<polyline points="1374,118.2 1382.75,128.4 1391.5,118.2" fill="none" stroke="#c8c8c8" stroke-width="3" stroke-linecap="butt" stroke-linejoin="miter" />
<line x1="1408" y1="105" x2="1408" y2="143.5" stroke="#c8c8c8" stroke-width="2" />
<line x1="1408" y1="112.9" x2="1429.5" y2="112.9" stroke="#c8c8c8" stroke-width="2" />
<line x1="1408" y1="135" x2="1418.5" y2="135" stroke="#c8c8c8" stroke-width="2" />
<rect x="1430" y="105.2" width="15.6" height="15.8" fill="#d5e4f5" stroke="#b9d0ec" stroke-width="1.8"/>
<rect x="1419" y="127.4" width="15.6" height="16" fill="#d5e4f5" stroke="#b9d0ec" stroke-width="1.8"/>
<polyline points="1453.6,118.2 1462.1999999999998,128.4 1470.8,118.2" fill="none" stroke="#c8c8c8" stroke-width="3" stroke-linecap="butt" stroke-linejoin="miter" />
<rect x="1499.3" y="105.5" width="37.4" height="9.3" fill="none" stroke="#c8c8c8" stroke-width="1.9"/>
<rect x="1521.3" y="119.5" width="16" height="9.5" fill="none" stroke="#c8c8c8" stroke-width="1.9"/>
<rect x="1499.3" y="133.8" width="20.5" height="9.5" fill="#d5e4f5" stroke="#b9d0ec" stroke-width="1.8"/>
<polyline points="1544.2,118.2 1552.9,128.4 1561.6,118.2" fill="none" stroke="#c8c8c8" stroke-width="3" stroke-linecap="butt" stroke-linejoin="miter" />
<rect x="1648.8" y="108.2" width="38" height="37.5" fill="none" stroke="#333333" stroke-width="2"/>
<rect x="1657.8" y="108.2" width="19.6" height="37.5" fill="#79b1e8" stroke="#1f5fb8" stroke-width="2"/>
<rect x="1658.8" y="121.5" width="10" height="12" fill="#f28b8b"/>
<line x1="1659.3" y1="121.5" x2="1659.3" y2="133.5" stroke="#e02828" stroke-width="2.4" />
<line x1="1648.8" y1="121" x2="1686.8" y2="121" stroke="#333333" stroke-width="2" />
<line x1="1648.8" y1="133.5" x2="1686.8" y2="133.5" stroke="#333333" stroke-width="2" />
<circle cx="1678.4" cy="118.8" r="16.3" fill="#4a7acb"/>
<text x="1673.0" y="127.3" font-family="'Liberation Sans', sans-serif" font-size="23" fill="#fff" font-weight="700" textLength="10.3" lengthAdjust="spacingAndGlyphs" >1</text>
<polyline points="1726,203.8 1734.65,213 1743.3,203.8" fill="none" stroke="#333333" stroke-width="3" stroke-linecap="butt" stroke-linejoin="miter" />
<path d="M1809.8,116 L1809.8,108.4 L1771.5,108.4 L1790.5,127 L1771.5,145.6 L1809.8,145.6 L1809.8,138" fill="none" stroke="#333333" stroke-width="2.5"/>
<polyline points="1785,203.8 1793.25,213 1801.5,203.8" fill="none" stroke="#333333" stroke-width="3" stroke-linecap="butt" stroke-linejoin="miter" />
<path d="M1851.8,145.2 L1851.8,135.8 L1864,135.8 L1864,127.3 L1875.5,127.3 L1875.5,119.8 L1887.8,119.8 L1887.8,145.2 Z" fill="none" stroke="#333333" stroke-width="2.2"/>
<path d="M1875.5,108.5 L1888.5,108.5 L1882,116.5 Z" fill="#79b1e8" stroke="#1f5fb8" stroke-width="1.8"/>
<rect x="1960.2" y="108.3" width="15.8" height="15.8" fill="#79b1e8" stroke="#1f5fb8" stroke-width="2"/>
<line x1="1968" y1="124" x2="1968" y2="138.5" stroke="#1f5fb8" stroke-width="2" />
<polyline points="1952.3,138.5 1952.3,131.5 1983.8,131.5 1983.8,138.5" fill="none" stroke="#1f5fb8" stroke-width="2" stroke-linecap="butt" stroke-linejoin="miter" />
<rect x="1949.3" y="138.8" width="7.2" height="6.6" fill="#79b1e8" stroke="#1f5fb8" stroke-width="2"/>
<rect x="1964.3" y="138.8" width="7.2" height="6.6" fill="#79b1e8" stroke="#1f5fb8" stroke-width="2"/>
<rect x="1980" y="138.8" width="7.2" height="6.6" fill="#79b1e8" stroke="#1f5fb8" stroke-width="2"/>
<line x1="1956.5" y1="142" x2="1964.3" y2="142" stroke="#1f5fb8" stroke-width="2" stroke-dasharray="2.5 2"/>
<line x1="1971.5" y1="142" x2="1980" y2="142" stroke="#1f5fb8" stroke-width="2" stroke-dasharray="2.5 2"/>
<circle cx="2068.8" cy="124.8" r="11.3" fill="#fff" stroke="#1f5fb8" stroke-width="2.6"/>
<line x1="2044" y1="150" x2="2060.5" y2="133.5" stroke="#333333" stroke-width="2.6" />
<path d="M2045,178.5 L2079,178.5 L2065.5,195.5 L2065.5,211.5 L2058.5,208 L2058.5,195.5 Z" fill="none" stroke="#333333" stroke-width="2.4" stroke-linejoin="round"/>
<path d="M2165,112 L2183.5,112 L2183.5,134.5 L2176.5,142.6 L2151.5,142.6 L2151.5,126" fill="none" stroke="#9a9a9a" stroke-width="2"/>
<polyline points="2176.5,142.6 2176.5,134.5 2183.5,134.5" fill="none" stroke="#9a9a9a" stroke-width="2" stroke-linecap="butt" stroke-linejoin="miter" />
<line x1="2160" y1="107.5" x2="2160" y2="124" stroke="#6f9bd4" stroke-width="2.2" />
<line x1="2151.5" y1="115.5" x2="2169" y2="115.5" stroke="#6f9bd4" stroke-width="2.2" />
<polyline points="2160.5,201.5 2168.5,211 2176.5,201.5" fill="none" stroke="#333333" stroke-width="3" stroke-linecap="butt" stroke-linejoin="miter" />
<rect x="2258.3" y="112.8" width="30" height="24" fill="none" stroke="#1f5fb8" stroke-width="2.4"/>
<rect x="2258.3" y="112.8" width="30" height="7" fill="#79b1e8" stroke="#1f5fb8" stroke-width="2.2"/>
<polyline points="2266,137 2266,147.2 2294.6,147.2 2294.6,130" fill="none" stroke="#333333" stroke-width="2.2" stroke-linecap="butt" stroke-linejoin="miter" />
<line x1="2270" y1="135" x2="2292" y2="135" stroke="#7ea6d8" stroke-width="1.6" stroke-dasharray="1.6 2.2"/>
<line x1="2270" y1="140" x2="2292" y2="140" stroke="#7ea6d8" stroke-width="1.6" stroke-dasharray="1.6 2.2"/>
<line x1="2270" y1="144" x2="2292" y2="144" stroke="#7ea6d8" stroke-width="1.6" stroke-dasharray="1.6 2.2"/>
<path d="M2451.5,116.2 L2471,116.2 A15.1,15.1 0 0 1 2471,146.4 L2450.4,146.4" fill="none" stroke="#333333" stroke-width="2.7"/>
<polyline points="2457.3,110.6 2451.5,116.3 2457.3,122" fill="none" stroke="#333333" stroke-width="2.7" stroke-linecap="butt" stroke-linejoin="miter" />
<path d="M2514,146.6 L2514,111.6 L2551.8,111.6 L2551.8,120" fill="none" stroke="#333333" stroke-width="2.4"/>
<line x1="2524" y1="111.6" x2="2524" y2="116" stroke="#333333" stroke-width="2" />
<line x1="2531" y1="111.6" x2="2531" y2="116" stroke="#333333" stroke-width="2" />
<line x1="2538" y1="111.6" x2="2538" y2="116" stroke="#333333" stroke-width="2" />
<line x1="2545" y1="111.6" x2="2545" y2="116" stroke="#333333" stroke-width="2" />
<line x1="2514" y1="119.5" x2="2518.5" y2="119.5" stroke="#333333" stroke-width="2" />
<line x1="2514" y1="126.5" x2="2518.5" y2="126.5" stroke="#333333" stroke-width="2" />
<line x1="2514" y1="133.5" x2="2518.5" y2="133.5" stroke="#333333" stroke-width="2" />
<line x1="2514" y1="140.5" x2="2518.5" y2="140.5" stroke="#333333" stroke-width="2" />
<line x1="2514" y1="146.6" x2="2522" y2="146.6" stroke="#333333" stroke-width="2.4" />
<path d="M2590.5,150.4 L2590.5,112.3 L2608,112.3 L2617,121.5 L2617,150.4 Z" fill="#f4f4f4" stroke="#a8a8a8" stroke-width="2"/>
<polyline points="2608,112.3 2608,121.5 2617,121.5" fill="none" stroke="#a8a8a8" stroke-width="2" stroke-linecap="butt" stroke-linejoin="miter" />
<rect x="2578.5" y="124.5" width="27" height="26.5" fill="#7fbf9f" stroke="#a8a8a8" stroke-width="1.6"/>
<text x="2583.0" y="145.8" font-family="'Liberation Sans', sans-serif" font-size="24" fill="#fafafa" font-weight="700" textLength="14.5" lengthAdjust="spacingAndGlyphs" >X</text>
<polyline points="2625.5,125 2633.75,136 2642,125" fill="none" stroke="#b4b4b4" stroke-width="2.8" stroke-linecap="butt" stroke-linejoin="miter" />
<path d="M131.5,202.2 L146.5,187.5 L160.5,201.5 L145.5,216.5 Z" fill="none" stroke="#8f8f8f" stroke-width="1.9" stroke-linejoin="round"/>
<path d="M133.5,203.5 L156.5,206 L145.5,216.5 Z" fill="#a9c8ee"/>
<line x1="146.5" y1="193" x2="156.5" y2="202.5" stroke="#6b9bd6" stroke-width="1.8" />
<path d="M150,191 L160.5,180.5 Q165,177.5 167,182.5 L156.5,195" fill="none" stroke="#8f8f8f" stroke-width="1.9"/>
<text x="213.7" y="213.0" font-family="'Liberation Sans', sans-serif" font-size="38" fill="#999" font-weight="700" textLength="20.0" lengthAdjust="spacingAndGlyphs" >B</text>
<polyline points="262.5,186.8 280,186.8" fill="none" stroke="#8f8f8f" stroke-width="2.2" stroke-linecap="butt" stroke-linejoin="miter" />
<polyline points="256,213.6 273.5,213.6" fill="none" stroke="#8f8f8f" stroke-width="2.2" stroke-linecap="butt" stroke-linejoin="miter" />
<line x1="271.5" y1="186.8" x2="264.5" y2="213.6" stroke="#8f8f8f" stroke-width="2.2" />
<path d="M305.2,186.5 L305.2,202 A7.3,8 0 0 0 319.8,202 L319.8,186.5" fill="none" stroke="#8f8f8f" stroke-width="2.2"/>
<line x1="301.8" y1="212.8" x2="322.8" y2="212.8" stroke="#8f8f8f" stroke-width="2" />
<path d="M367,184.2 L387.8,200.6 L375,213 L359.5,203.2 L370.5,190" fill="none" stroke="#8f8f8f" stroke-width="2" stroke-linejoin="round"/>
<line x1="360.5" y1="201.3" x2="386.5" y2="201.3" stroke="#8f8f8f" stroke-width="2" />
<path d="M390.8,203.5 Q394,207.5 393.3,210.3 Q392.3,212.6 390.8,212.6 Q389.3,212.6 388.4,210.3 Q387.8,207.5 390.8,203.5 Z" fill="none" stroke="#8f8f8f" stroke-width="1.8"/>
<rect x="355" y="213" width="44.7" height="8.7" fill="#f8f87c"/>
<polyline points="404,195.8 412.9,204 421.8,195.8" fill="none" stroke="#555" stroke-width="1.6" stroke-linecap="butt" stroke-linejoin="miter" />
<path d="M450.5,212.5 L461.7,185.5 L473,212.5 M454.5,203 L469,203" fill="none" stroke="#8f8f8f" stroke-width="2.6"/>
<rect x="439.6" y="213" width="44.2" height="8.7" fill="#f77b7e"/>
<polyline points="489,195.8 497.5,204 506,195.8" fill="none" stroke="#555" stroke-width="1.6" stroke-linecap="butt" stroke-linejoin="miter" />
<rect x="535" y="179.5" width="38" height="37.5" fill="none" stroke="#c8c8c8" stroke-width="1.9" stroke-dasharray="2.8 2.8"/>
<line x1="554" y1="180" x2="554" y2="216.5" stroke="#c8c8c8" stroke-width="1.9" stroke-dasharray="2.8 2.8"/>
<line x1="535" y1="198" x2="573" y2="198" stroke="#c8c8c8" stroke-width="1.9" stroke-dasharray="2.8 2.8"/>
<polyline points="584.5,193 593.0,202.5 601.5,193" fill="none" stroke="#b0b0b0" stroke-width="3.2" stroke-linecap="butt" stroke-linejoin="miter" />
<path d="M631,199.5 Q651,181 669,197" fill="none" stroke="#999" stroke-width="2"/>
<line x1="639" y1="187" x2="661.5" y2="212" stroke="#999" stroke-width="2" />
<circle cx="650.5" cy="204.5" r="4" fill="none" stroke="#6f9bd4" stroke-width="2"/>
<polyline points="677.5,195 685.75,204 694,195" fill="none" stroke="#333333" stroke-width="3.2" stroke-linecap="butt" stroke-linejoin="miter" />
<line x1="729.5" y1="190.7" x2="769" y2="190.7" stroke="#c8c8c8" stroke-width="2.2" />
<line x1="736" y1="199.9" x2="762.5" y2="199.9" stroke="#c8c8c8" stroke-width="2.2" />
<line x1="729.5" y1="208.5" x2="769" y2="208.5" stroke="#c8c8c8" stroke-width="2.2" />
<polyline points="777,194.5 785.5,204 794,194.5" fill="none" stroke="#c8c8c8" stroke-width="3" stroke-linecap="butt" stroke-linejoin="miter" />
<line x1="826" y1="181.2" x2="864" y2="181.2" stroke="#8f8f8f" stroke-width="2.2" />
<line x1="846.5" y1="193.6" x2="864" y2="193.6" stroke="#8f8f8f" stroke-width="2.2" />
<line x1="846.5" y1="205.8" x2="864" y2="205.8" stroke="#8f8f8f" stroke-width="2.2" />
<line x1="826" y1="218" x2="864" y2="218" stroke="#8f8f8f" stroke-width="2.2" />
<line x1="827" y1="199.3" x2="845.5" y2="199.3" stroke="#7ea6d8" stroke-width="2" />
<polyline points="833.5,192.8 827,199.3 833.5,205.8" fill="none" stroke="#7ea6d8" stroke-width="2" stroke-linecap="butt" stroke-linejoin="miter" />
<line x1="890.3" y1="181.2" x2="928" y2="181.2" stroke="#8f8f8f" stroke-width="2.2" />
<line x1="890.3" y1="193.6" x2="908" y2="193.6" stroke="#8f8f8f" stroke-width="2.2" />
<line x1="890.3" y1="205.8" x2="908" y2="205.8" stroke="#8f8f8f" stroke-width="2.2" />
<line x1="890.3" y1="218" x2="928" y2="218" stroke="#8f8f8f" stroke-width="2.2" />
<line x1="909" y1="199.3" x2="927" y2="199.3" stroke="#7ea6d8" stroke-width="2" />
<polyline points="920.5,192.8 927,199.3 920.5,205.8" fill="none" stroke="#7ea6d8" stroke-width="2" stroke-linecap="butt" stroke-linejoin="miter" />
<polyline points="977.6,204.3 977.6,182.5 1012.5,182.5 1012.5,204.3" fill="none" stroke="#333333" stroke-width="2.4" stroke-linecap="butt" stroke-linejoin="miter" />
<line x1="978.5" y1="212.4" x2="1012" y2="212.4" stroke="#1f5fb8" stroke-width="2.2" />
<polyline points="984,206.5 977.8,212.4 984,218.3" fill="none" stroke="#1f5fb8" stroke-width="2.4" stroke-linecap="butt" stroke-linejoin="miter" />
<polyline points="1006.5,206.5 1012.7,212.4 1006.5,218.3" fill="none" stroke="#1f5fb8" stroke-width="2.4" stroke-linecap="butt" stroke-linejoin="miter" />
<polyline points="1023.5,195 1031.75,204 1040,195" fill="none" stroke="#333333" stroke-width="3.2" stroke-linecap="butt" stroke-linejoin="miter" />
<text x="1082.8" y="214.0" font-family="'Liberation Sans', sans-serif" font-size="40" fill="#8f8f8f" font-weight="400" textLength="31.0" lengthAdjust="spacingAndGlyphs" >%</text>
<text x="1131.2" y="214.0" font-family="'Liberation Sans', sans-serif" font-size="40" fill="#8f8f8f" font-weight="400" textLength="39.6" lengthAdjust="spacingAndGlyphs" >$€</text>
<text x="1183.3" y="216.0" font-family="'Liberation Sans', sans-serif" font-size="35" fill="#333" font-weight="400" textLength="27.4" lengthAdjust="spacingAndGlyphs" >.0</text>
<line x1="1208.5" y1="188" x2="1223" y2="188" stroke="#1550a8" stroke-width="3.4" />
<line x1="1215.7" y1="180.5" x2="1215.7" y2="196" stroke="#1550a8" stroke-width="3.4" />
<text x="1236.3" y="216.0" font-family="'Liberation Sans', sans-serif" font-size="35" fill="#333" font-weight="400" textLength="26.4" lengthAdjust="spacingAndGlyphs" >.0</text>
<line x1="1260.5" y1="188.2" x2="1275.3" y2="188.2" stroke="#1550a8" stroke-width="3.4" />
<rect x="1329.5" y="184.5" width="38" height="27" fill="none" stroke="#c8c8c8" stroke-width="1.9"/>
<line x1="1354.5" y1="184.5" x2="1354.5" y2="211.5" stroke="#c8c8c8" stroke-width="1.9" />
<rect x="1329.8" y="190.8" width="33" height="14" fill="#d5e4f5" stroke="#b9d0ec" stroke-width="1.8"/>
<polyline points="1377,192.3 1385.4,202.5 1393.8,192.3" fill="none" stroke="#a8a8a8" stroke-width="3.2" stroke-linecap="butt" stroke-linejoin="miter" />
<polyline points="1414,211 1422.5,194.5 1433.6,201.4 1441.5,185" fill="none" stroke="#c8c8c8" stroke-width="1.9" stroke-linecap="butt" stroke-linejoin="miter" />
<circle cx="1413.6" cy="212" r="4.6" fill="#d5e4f5" stroke="#b9d0ec" stroke-width="1.8"/>
<circle cx="1442.4" cy="183.7" r="4.6" fill="#d5e4f5" stroke="#b9d0ec" stroke-width="1.8"/>
<polyline points="1456.3,192.3 1464.9499999999998,202.5 1473.6,192.3" fill="none" stroke="#a8a8a8" stroke-width="3.2" stroke-linecap="butt" stroke-linejoin="miter" />
<line x1="1498" y1="212.9" x2="1537.8" y2="212.9" stroke="#1550a8" stroke-width="2.2" />
<path d="M2288.2,196.2 L2293.1,196.5 L2293.1,202.5 L2288.2,202.8 L2287.1,205.7 L2290.3,209.4 L2286.1,213.6 L2282.4,210.4 L2279.5,211.5 L2279.2,216.4 L2273.2,216.4 L2272.9,211.5 L2270.0,210.4 L2266.3,213.6 L2262.1,209.4 L2265.3,205.7 L2264.2,202.8 L2259.3,202.5 L2259.3,196.5 L2264.2,196.2 L2265.3,193.3 L2262.1,189.6 L2266.3,185.4 L2270.0,188.6 L2272.9,187.5 L2273.2,182.6 L2279.2,182.6 L2279.5,187.5 L2282.4,188.6 L2286.1,185.4 L2290.3,189.6 L2287.1,193.3 Z" fill="none" stroke="#333333" stroke-width="2.1" stroke-linejoin="round"/>
<circle cx="2276.2" cy="199.5" r="6.5" fill="none" stroke="#1f5fb8" stroke-width="2.4"/>
<path d="M2486.5,185.2 L2466.1,185.2 A15.1,15.1 0 0 0 2466.1,215.4 L2487.8,215.4" fill="none" stroke="#8f8f8f" stroke-width="2.7"/>
<polyline points="2481.4,179.6 2487,185.2 2481.4,190.8" fill="none" stroke="#8f8f8f" stroke-width="2.7" stroke-linecap="butt" stroke-linejoin="miter" />
<path d="M2522,207.5 L2516,207.5 Q2510.5,207 2510.5,200 Q2511,193 2518,192.5 Q2520,182 2530.5,181.8 Q2540.5,182 2543,191.5 Q2550.5,192.5 2550.5,200 Q2550,207 2544,207.5 L2539,207.5" fill="none" stroke="#333333" stroke-width="2"/>
<line x1="2530.5" y1="217" x2="2530.5" y2="194" stroke="#1f5fb8" stroke-width="2.4" />
<polyline points="2523,201.5 2530.5,194 2538,201.5" fill="none" stroke="#1f5fb8" stroke-width="2.4" stroke-linecap="butt" stroke-linejoin="miter" />
<path d="M2597.3,181.6 A16.2,16.2 0 1 1 2581.35,195" fill="none" stroke="#1550a8" stroke-width="3.2"/>
<path d="M2578.4,192.6 L2587.2,187.3 L2587.2,197.6 Z" fill="#1550a8"/>
<polyline points="2624,192.8 2632.0,202.5 2640,192.8" fill="none" stroke="#333333" stroke-width="3.2" stroke-linecap="butt" stroke-linejoin="miter" />
<polyline points="2787.5,259.5 2800.5,273.5 2813.5,259.5" fill="none" stroke="#333333" stroke-width="1.8" stroke-linecap="butt" stroke-linejoin="miter" />
<rect x="663.8" y="491.8" width="20.6" height="13.3" fill="none" stroke="#333" stroke-width="1.5"/>
<path d="M677.5,495.5 L682,495.5 L679.75,498 Z" fill="#333"/>
<circle cx="898.8" cy="492.6" r="3.8" fill="none" stroke="#333" stroke-width="1.4"/>
<path d="M892.5,503.5 Q893,497 898.8,497 Q904.5,497 905,501" fill="none" stroke="#333" stroke-width="1.4"/>
<circle cx="890.3" cy="499.8" r="3.4" fill="none" stroke="#333" stroke-width="1.4"/>
<path d="M885.5,510 Q886,504 890.3,504 Q894.5,504 895,508" fill="none" stroke="#333" stroke-width="1.4"/>
<polyline points="898,506 901,509.5 906.5,503" fill="none" stroke="#333" stroke-width="1.4" stroke-linecap="butt" stroke-linejoin="miter" />
<rect x="1461.8" y="491.8" width="20.6" height="13.3" fill="none" stroke="#333" stroke-width="1.5"/>
<path d="M1475.5,495.5 L1480,495.5 L1477.75,498 Z" fill="#333"/>
<circle cx="1696.8" cy="492.6" r="3.8" fill="none" stroke="#333" stroke-width="1.4"/>
<path d="M1690.5,503.5 Q1691,497 1696.8,497 Q1702.5,497 1703,501" fill="none" stroke="#333" stroke-width="1.4"/>
<circle cx="1688.3" cy="499.8" r="3.4" fill="none" stroke="#333" stroke-width="1.4"/>
<path d="M1683.5,510 Q1684,504 1688.3,504 Q1692.5,504 1693,508" fill="none" stroke="#333" stroke-width="1.4"/>
<polyline points="1696,506 1699,509.5 1704.5,503" fill="none" stroke="#333" stroke-width="1.4" stroke-linecap="butt" stroke-linejoin="miter" />
<rect x="88.5" y="1474.5" width="18" height="19.5" fill="#fff" stroke="#555" stroke-width="2"/>
<rect x="80.5" y="1484.5" width="17.5" height="17.5" fill="#fff" stroke="#555" stroke-width="2"/>
<line x1="83.5" y1="1496.5" x2="95" y2="1496.5" stroke="#1f5fb8" stroke-width="1.8" />
<line x1="180.5" y1="1477.5" x2="180.5" y2="1503.8" stroke="#333333" stroke-width="2" />
<line x1="167" y1="1490.6" x2="194" y2="1490.6" stroke="#333333" stroke-width="2" />
<path d="M2095.4,1548.8 L2100.4,1549.2 L2100.4,1555.2 L2095.4,1555.6 L2094.3,1558.4 L2097.5,1562.2 L2093.3,1566.4 L2089.5,1563.2 L2086.7,1564.3 L2086.3,1569.3 L2080.3,1569.3 L2079.9,1564.3 L2077.1,1563.2 L2073.3,1566.4 L2069.1,1562.2 L2072.3,1558.4 L2071.2,1555.6 L2066.2,1555.2 L2066.2,1549.2 L2071.2,1548.8 L2072.3,1546.0 L2069.1,1542.2 L2073.3,1538.0 L2077.1,1541.2 L2079.9,1540.1 L2080.3,1535.1 L2086.3,1535.1 L2086.7,1540.1 L2089.5,1541.2 L2093.3,1538.0 L2097.5,1542.2 L2094.3,1546.0 Z" fill="none" stroke="#444" stroke-width="2.1" stroke-linejoin="round"/>
<circle cx="2083.3" cy="1552.2" r="7" fill="none" stroke="#1f5fb8" stroke-width="2.4"/>
<line x1="2126" y1="1553.9" x2="2148" y2="1553.9" stroke="#333333" stroke-width="2.6" />
<line x1="2302" y1="1555" x2="2325" y2="1555" stroke="#333333" stroke-width="2.6" />
<line x1="2313.4" y1="1543.3" x2="2313.4" y2="1566.6" stroke="#333333" stroke-width="2.6" />
<line x1="2520.8" y1="1539" x2="2520.8" y2="1560" stroke="#333333" stroke-width="3" />
<polyline points="2539.5,1539.5 2529.5,1549.5 2539.5,1559.5" fill="none" stroke="#333333" stroke-width="3" stroke-linecap="butt" stroke-linejoin="miter" />
<polyline points="2569,1539.5 2559,1549.5 2569,1559.5" fill="none" stroke="#333333" stroke-width="3" stroke-linecap="butt" stroke-linejoin="miter" />
<polyline points="2726,1539.5 2736,1549.5 2726,1559.5" fill="none" stroke="#333333" stroke-width="3" stroke-linecap="butt" stroke-linejoin="miter" />
<polyline points="2754,1539.5 2764,1549.5 2754,1559.5" fill="none" stroke="#333333" stroke-width="3" stroke-linecap="butt" stroke-linejoin="miter" />
<line x1="2772.5" y1="1539" x2="2772.5" y2="1560" stroke="#333333" stroke-width="3" />
<rect x="2785.5" y="1532.5" width="8.099999999999909" height="7.5" fill="#cccccc"/>
<rect x="2801" y="1532.5" width="7.5" height="7.5" fill="#cccccc"/>
<rect x="2785.5" y="1547" width="8.099999999999909" height="7.599999999999909" fill="#cccccc"/>
<rect x="2785" y="1561" width="9.599999999999909" height="9" fill="#f03a3a"/>
<rect x="2799" y="1545.5" width="11" height="24.5" fill="#f7b500"/>
<rect x="2814" y="1531" width="10.400000000000091" height="39" fill="#5ad14a"/>
</svg>
<svg class="ov" style="z-index:24" width="2836" height="1588" viewBox="0 0 2836 1588">
<text x="1091.5" y="845.5" font-family="'Liberation Sans', sans-serif" font-size="25" fill="#201f1e" font-weight="400" textLength="130.0" lengthAdjust="spacingAndGlyphs" >@lumel.com</text>
<text x="1267.4" y="844.4" font-family="'Liberation Sans', sans-serif" font-size="29.8" fill="#201f1e" font-weight="400" textLength="18.2" lengthAdjust="spacingAndGlyphs" >X</text>
<text x="914.3" y="918.6" font-family="'Liberation Sans', sans-serif" font-size="30.4" fill="#a19f9d" font-weight="400" textLength="157.7" lengthAdjust="spacingAndGlyphs" >Search users</text>
<text x="973.8" y="971.3" font-family="'Liberation Sans', sans-serif" font-size="22.3" fill="#201f1e" font-weight="400" textLength="262.4" lengthAdjust="spacingAndGlyphs" >Aneez Fathima Kudbudeen</text>
<text x="1139.5" y="1004.7" font-family="'Liberation Sans', sans-serif" font-size="24" fill="#a19f9d" font-weight="400" textLength="133.0" lengthAdjust="spacingAndGlyphs" >@lumel.com</text>
<text x="978.3" y="1062.7" font-family="'Liberation Sans', sans-serif" font-size="22.3" fill="#201f1e" font-weight="400" textLength="166.8" lengthAdjust="spacingAndGlyphs" >Annamalai Palani</text>
<text x="1102.9" y="1096.5" font-family="'Liberation Sans', sans-serif" font-size="24" fill="#a19f9d" font-weight="400" textLength="133.3" lengthAdjust="spacingAndGlyphs" >@lumel.com</text>
<text x="978.3" y="1154.5" font-family="'Liberation Sans', sans-serif" font-size="22.3" fill="#201f1e" font-weight="400" textLength="165.7" lengthAdjust="spacingAndGlyphs" >Anooradha Patro</text>
<text x="1109.7" y="1188.0" font-family="'Liberation Sans', sans-serif" font-size="24" fill="#a19f9d" font-weight="400" textLength="132.8" lengthAdjust="spacingAndGlyphs" >@lumel.com</text>
<text x="973.8" y="1246.3" font-family="'Liberation Sans', sans-serif" font-size="22.3" fill="#201f1e" font-weight="400" textLength="271.3" lengthAdjust="spacingAndGlyphs" >Anoovendhan Subramanian</text>
<text x="1132.2" y="1280.0" font-family="'Liberation Sans', sans-serif" font-size="24" fill="#a19f9d" font-weight="400" textLength="132.8" lengthAdjust="spacingAndGlyphs" >@lumel.com</text>
<clipPath id="av1"><circle cx="925.3" cy="835.4" r="17.7"/></clipPath>
<g clip-path="url(#av1)"><rect x="905" y="815" width="42" height="42" fill="#e2bd6e"/><rect x="930" y="826" width="16" height="14" fill="#e9a878"/><ellipse cx="922" cy="838" rx="8" ry="14" fill="#3c2a22"/><ellipse cx="926" cy="832" rx="5" ry="6.5" fill="#d08a6a"/><path d="M916,842 Q928,835 944,842 L944,856 L916,856 Z" fill="#5b566e"/><path d="M913,836 Q918,846 916,856 L912,856 Z" fill="#3c2a22"/></g>
<clipPath id="av2"><circle cx="928.4" cy="1071.4" r="27.5"/></clipPath>
<g clip-path="url(#av2)"><rect x="898" y="1042" width="62" height="60" fill="#8fb262"/><rect x="938" y="1042" width="20" height="34" fill="#6f8a58"/><path d="M898,1075 Q912,1066 928,1070 Q944,1066 958,1072 L958,1102 L898,1102 Z" fill="#e2556a"/><ellipse cx="928.2" cy="1059" rx="8.8" ry="11" fill="#b98274"/><path d="M918.5,1057 Q917,1044 928.5,1044 Q940,1044 938.5,1057 Q936,1050 928.5,1050 Q921,1050 918.5,1057 Z" fill="#1f1a1a"/><path d="M921,1064 Q928,1078 936,1064 Q934,1072 928.5,1073 Q923,1072 921,1064 Z" fill="#2a2020"/></g>
<clipPath id="av3"><circle cx="928.4" cy="1162.6" r="27.5"/></clipPath>
<g clip-path="url(#av3)"><rect x="898" y="1133" width="62" height="60" fill="#e6e1db"/><rect x="940" y="1133" width="20" height="60" fill="#d8cfc4"/><ellipse cx="929.5" cy="1156" rx="12.5" ry="14.5" fill="#2a2220"/><ellipse cx="929" cy="1161" rx="9.6" ry="13.5" fill="#cfae98"/><circle cx="924.7" cy="1158" r="2" fill="#5a3a30"/><circle cx="933.3" cy="1158" r="2" fill="#5a3a30"/><path d="M912,1192 L918,1178 Q929,1174 941,1178 L946,1192 Z" fill="#f2f2f4"/><path d="M919,1192 Q920,1182 929,1181 Q938,1182 940,1192 Z" fill="#25305a"/></g>
<circle cx="926" cy="1254" r="26.2" fill="#dcdcdc"/>
</svg>
</body></html>
